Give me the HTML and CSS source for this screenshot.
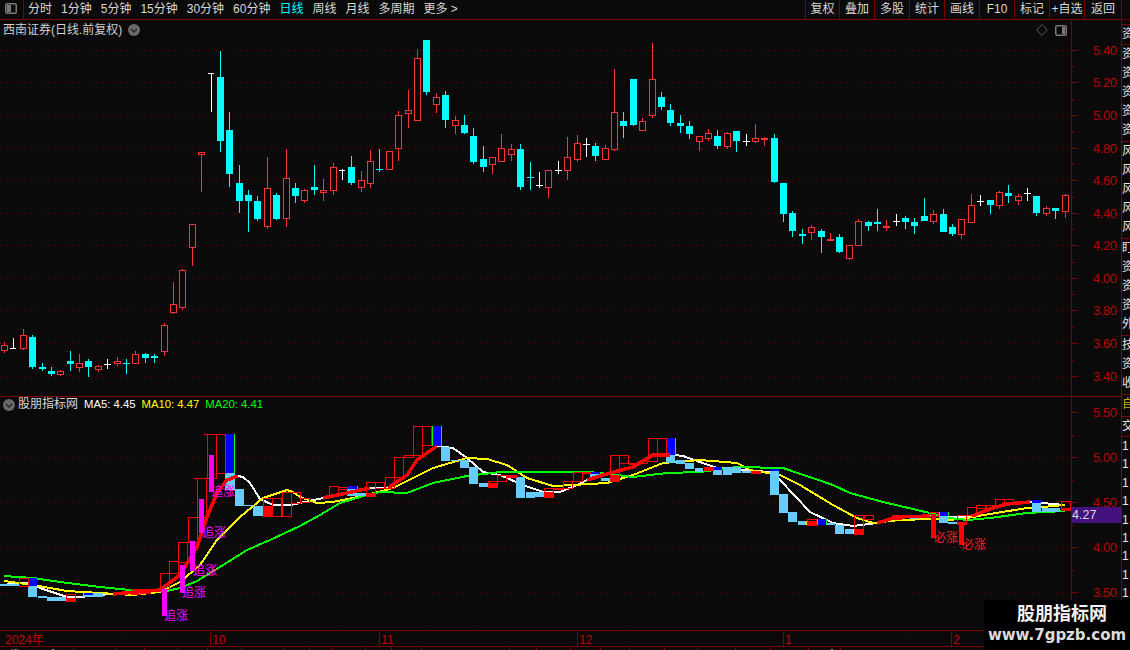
FILE: index.html
```html
<!DOCTYPE html>
<html lang="zh-CN">
<head>
<meta charset="utf-8">
<title>西南证券 日线</title>
<link rel="stylesheet" href="styles.css">
</head>
<body>
<div class="app">
  <header class="toolbar">
    <div class="layout-btn">
      <svg class="panel-icon" viewBox="0 0 12 11"><rect x="0.75" y="0.75" width="10.5" height="9.5" rx="1.5" class="pi-frame"/><rect x="2" y="2" width="4" height="7" class="pi-fill"/></svg>
    </div>
    <nav class="periods">
      <span>分时</span><span>1分钟</span><span>5分钟</span><span>15分钟</span><span>30分钟</span><span>60分钟</span><span class="active">日线</span><span>周线</span><span>月线</span><span>多周期</span><span>更多 &gt;</span>
    </nav>
    <nav class="tools">
      <span>复权</span><span>叠加</span><span>多股</span><span>统计</span><span>画线</span><span>F10</span><span>标记</span><span>+自选</span><span>返回</span>
    </nav>
    <div class="corner"></div>
  </header>

  <div class="workspace">
    <div class="charts">
      <section class="panel panel-main">
        <div class="chart-title">西南证券(日线.前复权)
          <svg class="chev" viewBox="0 0 12 12"><circle cx="6" cy="6" r="6" class="chev-bg"/><path d="M3 5l3 3 3-3" class="chev-mark"/></svg>
        </div>
        <div class="chart-tools">
          <svg class="diamond" viewBox="0 0 12 12"><path d="M6 .7L11.3 6 6 11.300 .7 6z" class="dia"/></svg>
          <svg class="panel-icon" viewBox="0 0 12 11"><rect x="0.75" y="0.75" width="10.5" height="9.5" rx="1.500" class="pi-frame"/><rect x="7" y="2" width="3" height="7" class="pi-fill"/></svg>
        </div>
        <svg class="plot" width="1121" height="376" viewBox="0 20 1121 376">
          <path class="grid" d="M0 50.500H1071M0 82.500H1071M0 115.500H1071M0 148.500H1071M0 180.500H1071M0 213.500H1071M0 245.500H1071M0 278.500H1071M0 310.500H1071M0 343.500H1071M0 376.500H1071"/>
          <path class="axis" d="M1071.500 20V396M1071 50.500h7M1071 82.500h7M1071 115.500h7M1071 148.500h7M1071 180.500h7M1071 213.500h7M1071 245.500h7M1071 278.500h7M1071 310.500h7M1071 343.500h7M1071 376.500h7M1071 66.500h3M1071 99.500h3M1071 132.500h3M1071 164.500h3M1071 197.500h3M1071 229.500h3M1071 262.500h3M1071 294.500h3M1071 327.500h3M1071 360.500h3"/>
          <g class="ticklabels">
            <text x="1093" y="55">5.40</text><text x="1093" y="87">5.20</text><text x="1093" y="120">5.00</text><text x="1093" y="153">4.80</text><text x="1093" y="185">4.60</text><text x="1093" y="218">4.40</text><text x="1093" y="250">4.20</text><text x="1093" y="283">4.00</text><text x="1093" y="315">3.80</text><text x="1093" y="348">3.60</text><text x="1093" y="381">3.40</text>
          </g>
          <path class="wick-red" d="M4.500 342V353M23.500 329V350M60.500 370V376M79.500 354V372M98.500 365V372M117.500 357V366M135.500 351V364M164.500 323V356M173.500 282V314M182.500 269V310M192.500 224V266M201.500 153V192M267.500 157V229M286.500 149V227M304.500 189V203M323.500 179V201M333.500 163V195M361.500 171V192M370.500 150V188M398.500 111V161M408.500 90V128M417.500 49V121M436.500 93V113M455.500 116V134M492.500 157V174M501.500 134V162M511.500 144V161M548.500 170V198M567.500 137V180M577.500 135V162M605.500 145V160M614.500 69V151M642.500 118V131M652.500 43V118M699.500 136V151M708.500 129V141M727.500 132V149M755.500 124V143M764.500 137V146M811.500 225V240M830.500 233V241M849.500 245V260M858.500 219V246M886.500 220V231M933.500 210V224M961.500 219V239M971.500 194V223M999.500 191V209M1018.500 194V205M1046.500 206V216M1065.500 194V218"/>
          <path class="body-red" d="M1.500 345.500h6v5h-6zM20.500 335.500h6v13h-6zM57.500 371.500h6v3h-6zM76.500 363.500h6v4h-6zM95.500 366.500h6v3h-6zM114.500 361.500h6v2h-6zM132.500 354.500h6v9h-6zM161.500 325.500h6v26h-6zM170.500 304.500h6v8h-6zM179.500 270.500h6v37h-6zM189.500 224.500h6v23h-6zM198.500 152.500h6v2h-6zM264.500 188.500h6v38h-6zM283.500 178.500h6v40h-6zM301.500 190.500h6v10h-6zM320.500 190.500h6v2h-6zM330.500 167.500h6v23h-6zM358.500 180.500h6v7h-6zM367.500 161.500h6v22h-6zM386.500 151.500h6v18h-6zM395.500 115.500h6v33h-6zM405.500 110.500h6v3h-6zM414.500 58.500h6v62h-6zM433.500 97.500h6v7h-6zM452.500 120.500h6v5h-6zM489.500 157.500h6v7h-6zM498.500 148.500h6v13h-6zM508.500 149.500h6v5h-6zM545.500 170.500h6v17h-6zM564.500 157.500h6v13h-6zM574.500 143.500h6v16h-6zM602.500 148.500h6v11h-6zM611.500 112.500h6v37h-6zM639.500 121.500h6v9h-6zM649.500 79.500h6v36h-6zM696.500 136.500h6v5h-6zM705.500 133.500h6v5h-6zM724.500 133.500h6v13h-6zM752.500 138.500h6v3h-6zM761.500 138.500h6v1h-6zM808.500 227.500h6v5h-6zM827.500 239.500h6v1h-6zM846.500 245.500h6v13h-6zM855.500 221.500h6v24h-6zM883.500 226.500h6v1h-6zM930.500 214.500h6v7h-6zM958.500 219.500h6v15h-6zM968.500 205.500h6v17h-6zM996.500 192.500h6v13h-6zM1015.500 196.500h6v4h-6zM1043.500 208.500h6v5h-6zM1062.500 195.500h6v16h-6z"/>
          <path class="wick-cyan" d="M32.500 335V369M42.500 363V371M51.500 367V376M70.500 351V371M88.500 359V377M126.500 359V374M123 363.500h7M145.500 353V363M154.500 354V363M220.500 51V152M229.500 112V187M239.500 165V213M248.500 190V232M257.500 196V221M276.500 193V220M295.500 183V203M314.500 165V195M351.500 156V185M379.500 149V172M376 169.500h7M426.500 40V95M445.500 91V128M464.500 115V134M473.500 128V164M483.500 146V172M520.500 144V190M530.500 162V190M527 177.500h7M595.500 143V161M623.500 112V138M633.500 79V126M661.500 92V110M670.500 104V126M680.500 115V133M689.500 121V139M717.500 130V149M736.500 131V152M774.500 134V183M783.500 183V222M792.500 211V237M802.500 229V244M821.500 229V253M839.500 234V253M868.500 221V231M877.500 209V231M905.500 216V229M914.500 218V234M924.500 198V221M943.500 209V232M952.500 224V236M990.500 200V214M1008.500 185V203M1036.500 196V216M1055.500 208V219"/>
          <path class="body-cyan" d="M29 337h7v30h-7zM39 367h7v2h-7zM48 371h7v3h-7zM67 361h7v3h-7zM85 361h7v6h-7zM142 354h7v4h-7zM151 356h7v2h-7zM217 77h7v64h-7zM226 130h7v44h-7zM236 183h7v18h-7zM245 195h7v6h-7zM254 201h7v18h-7zM273 195h7v24h-7zM292 188h7v8h-7zM311 187h7v3h-7zM348 167h7v16h-7zM423 40h7v52h-7zM442 95h7v25h-7zM461 125h7v8h-7zM470 136h7v26h-7zM480 159h7v8h-7zM517 149h7v38h-7zM592 146h7v10h-7zM620 121h7v5h-7zM630 79h7v46h-7zM658 97h7v10h-7zM667 110h7v13h-7zM677 123h7v3h-7zM686 126h7v8h-7zM714 136h7v10h-7zM733 131h7v10h-7zM771 138h7v44h-7zM780 183h7v31h-7zM789 213h7v18h-7zM799 234h7v2h-7zM818 231h7v6h-7zM836 237h7v15h-7zM865 222h7v4h-7zM874 222h7v2h-7zM902 218h7v4h-7zM911 222h7v4h-7zM921 216h7v5h-7zM940 214h7v18h-7zM949 227h7v7h-7zM987 200h7v5h-7zM1005 193h7v3h-7zM1033 196h7v17h-7zM1052 208h7v3h-7z"/>
          <path class="wick-white" d="M13.500 338V349M10 348.500h6M107.500 359V369M104 364.500h7M211.500 73V112M208 73.500h6M342.500 169V180M339 170.500h6M539.500 172V188M536 185.500h7M558.500 161V174M555 170.500h7M586.500 138V157M583 144.500h7M746.500 134V146M743 141.500h7M896.500 214V226M893 221.500h7M980.500 195V206M977 201.500h7M1027.500 188V201M1024 193.500h7"/>
        </svg>
      </section>

      <section class="panel panel-sub">
        <div class="legend">
          <svg class="chev" viewBox="0 0 12 12"><circle cx="6" cy="6" r="6" class="chev-bg"/><path d="M3 5l3 3 3-3" class="chev-mark"/></svg>
          <span class="legend-name">股朋指标网</span><span class="ma5">MA5: 4.45</span><span class="ma10">MA10: 4.47</span><span class="ma20">MA20: 4.41</span>
        </div>
        <svg class="plot" width="1121" height="233" viewBox="0 397 1121 233">
          <path class="grid" d="M0 457.500H1071M0 502.500H1071M0 547.500H1071M0 592.500H1071"/>
          <path class="axis" d="M1071.500 397V630M1071 412.500h7M1071 457.500h7M1071 502.500h7M1071 547.500h7M1071 592.500h7M1071 435.500h3M1071 480.500h3M1071 525.500h3M1071 570.500h3M1071 615.500h3"/>
          <g class="ticklabels">
            <text x="1093" y="417">5.50</text><text x="1093" y="462">5.00</text><text x="1093" y="507">4.50</text><text x="1093" y="552">4.00</text><text x="1093" y="597">3.50</text>
          </g>
          <polyline class="ma-white" points="0,585 27,583 40,588 67,597 80,597 110,594 133,594 160,590 180,575 197,547 207,517 217,493 227,480 238,476 243,477 250,483 260,499 273,505 290,505 300,503 323,498 347,493 370,488 388,488 407,475 417,460 437,446 453,448 467,458 483,472 500,475 523,485 543,492 560,492 577,485 587,480 610,473 633,467 653,455 667,454 683,456 700,462 717,468 770,472 780,480 810,512 833,523 853,526 877,523 897,517 930,516 967,517 972,516 993,508 1007,504 1030,502 1065,505"/>
          <polyline class="ma-yellow" points="4,581 33,585 67,591 100,593 133,595 160,592 180,582 200,565 217,540 240,517 263,498 287,490 293,492 300,497 317,503 333,502 367,495 393,488 413,478 433,468 467,458 487,459 507,465 527,478 553,486 573,485 607,483 633,475 663,463 700,460 737,463 750,470 780,475 800,485 833,505 857,518 873,523 900,520 930,519 950,520 967,518 990,514 1027,508 1043,507 1065,505"/>
          <polyline class="ma-green" points="4,576 33,578 60,582 100,587 130,590 167,591 180,588 197,581 220,567 247,550 270,540 300,526 320,515 340,503 367,495 380,492 407,493 433,483 467,476 500,472 587,472 600,473 633,477 667,473 700,472 737,467 783,468 833,485 850,493 883,502 930,513 950,518 967,520 990,518 1027,513 1065,511"/>
          <path class="bar-lightblue" d="M0 584h19v2h-19zM28 586h9v11h-9zM38 596h9v2h-9zM47 597h19v4h-19zM83 593h20v4h-20zM225 473h10v17h-10zM235 489h9v17h-9zM244 505h9v1h-9zM253 506h10v10h-10zM347 489h10v7h-10zM357 493h9v3h-9zM441 447h9v14h-9zM451 460h9v1h-9zM460 460h9v8h-9zM469 467h9v17h-9zM479 483h9v4h-9zM516 477h9v21h-9zM526 492h9v6h-9zM535 492h9v5h-9zM590 474h10v4h-10zM601 478h9v3h-9zM666 455h9v8h-9zM676 460h9v4h-9zM685 463h9v6h-9zM695 468h8v4h-8zM713 470h9v5h-9zM723 467h9v8h-9zM732 467h9v6h-9zM742 471h9v2h-9zM770 471h9v24h-9zM779 494h9v19h-9zM788 512h9v10h-9zM798 521h8v4h-8zM826 523h9v2h-9zM835 525h9v9h-9zM845 529h8v5h-8zM910 516h9v3h-9zM939 515h9v8h-9zM948 522h9v2h-9zM1032 502h9v10h-9zM1042 508h18v4h-18z"/>
          <path class="bar-blue" d="M28 578h9v8h-9zM84 593h9v2h-9zM225 434h9v39h-9zM347 486h10v3h-10zM432 426h9v20h-9zM591 472h9v2h-9zM666 438h9v17h-9zM713 467h9v3h-9zM770 469h9v2h-9zM817 519h9v6h-9zM910 515h9v2h-9zM939 512h9v4h-9zM1032 500h9v3h-9z"/>
          <path class="side-green" d="M225.500 434V473M234.500 434V473M357.500 486V489M432.500 426V446M441.500 426V446M600.500 472V474M666.500 438V455M675.500 438V455M817.500 519V525M826.500 519V525M939.500 512V516M948.500 512V516"/>
          <path class="bar-red" d="M66 598h9v3h-9zM263 506h9v10h-9zM366 493h9v3h-9zM488 483h9v4h-9zM507 475h9v2h-9zM544 492h9v5h-9zM610 475h9v6h-9zM704 467h9v3h-9zM751 471h9v2h-9zM807 521h9v4h-9zM854 529h9v5h-9zM957 522h9v2h-9zM1061 508h9v3h-9z"/>
          <path class="side-yellow" d="M263.500 506V516M272.500 506V516M375.500 493V496M497.500 483V487M553.500 492V497M619.500 475V481M806.500 521V525M853.500 529V534M863.500 529V534"/>
          <path class="box-red" d="M19.500 578.500h9v8h-9zM66.500 594.500h9v7h-9zM131.500 589.500h9v5h-9zM141.500 589.500h9v4h-9zM160.500 573.500h9v16h-9zM169.500 561.500h9v12h-9zM178.500 542.500h9v20h-9zM188.500 517.500h9v25h-9zM197.500 478.500h9v39h-9zM194 478.500h3M207.500 434.500h9v44h-9zM204 434.500h3M216.500 434.500h9v39h-9zM263.500 498.500h9v18h-9zM272.500 498.500h9v18h-9zM282.500 492.500h9v24h-9zM291.500 492.500h9v11h-9zM300.500 498.500h9v4h-9zM329.500 486.500h9v10h-9zM338.500 487.500h9v2h-9zM366.500 482.500h9v14h-9zM375.500 482.500h9v6h-9zM385.500 477.500h9v11h-9zM394.500 457.500h9v20h-9zM404.500 455.500h9v2h-9zM413.500 426.500h9v29h-9zM422.500 426.500h9v19h-9zM488.500 481.500h9v6h-9zM497.500 475.500h9v6h-9zM507.500 475.500h9v2h-9zM544.500 488.500h9v9h-9zM554.500 488.500h9v1h-9zM563.500 481.500h9v7h-9zM573.500 472.500h9v9h-9zM582.500 472.500h8v1h-8zM610.500 455.500h9v26h-9zM619.500 455.500h9v8h-9zM629.500 463.500h9v1h-9zM638.500 461.500h9v2h-9zM648.500 438.500h9v23h-9zM657.500 438.500h9v16h-9zM704.500 467.500h9v3h-9zM751.500 471.500h9v2h-9zM807.500 519.500h9v6h-9zM854.500 515.500h9v19h-9zM864.500 515.500h9v4h-9zM892.500 515.500h9v4h-9zM929.500 512.500h9v4h-9zM957.500 515.500h9v9h-9zM967.500 507.500h9v8h-9zM976.500 505.500h9v3h-9zM986.500 505.500h9v3h-9zM995.500 499.500h9v7h-9zM1004.500 499.500h9v4h-9zM1061.500 501.500h9v9h-9z"/>
          <polyline class="ma-red" points="113,594 160,590 180,575 197,547 207,517 217,493 227,480 238,476"/>
          <polyline class="ma-red" points="323,498 347,493 370,488"/>
          <polyline class="ma-red" points="388,488 407,475 417,460 437,446"/>
          <polyline class="ma-red" points="587,480 610,473 633,467 653,455 670,455"/>
          <polyline class="ma-red" points="877,523 897,517 930,516"/>
          <polyline class="ma-red" points="972,516 993,508 1007,504 1030,502"/>
          <path class="signal-magenta" d="M162 589h5v27h-5zM180 565h5v28h-5zM190 541h5v30h-5zM199 499h5v34h-5zM209 455h5v37h-5z"/>
          <path class="signal-red" d="M931 514h5v24h-5zM959 525h5v20h-5z"/>
          <g class="signal-text-magenta">
            <text x="164" y="620">追涨</text><text x="182" y="597">追涨</text><text x="193" y="575">追涨</text><text x="202" y="537">追涨</text><text x="211" y="496">追涨</text>
          </g>
          <g class="signal-text-red">
            <text x="934" y="542">必涨</text><text x="962" y="549">必涨</text>
          </g>
        </svg>
        <div class="price-tag">4.27</div>
      </section>

      <svg class="timeline" width="1121" height="15" viewBox="0 631 1121 15">
        <path class="axis" d="M210.500 631V646M379.500 631V646M577.500 631V646M783.500 631V646M951.500 631V646M76.500 631v2M121.500 631v2M166.500 631v2M295.500 631v2M338.500 631v2M429.500 631v2M477.500 631v2M527.500 631v2M629.500 631v2M680.500 631v2M732.500 631v2M824.500 631v2M868.500 631v2M910.500 631v2M1071.500 631V646"/>
        <g class="timelabels">
          <text x="5" y="644">2024年</text><text x="212" y="644">10</text><text x="381" y="644">11</text><text x="579" y="644">12</text><text x="785" y="644">1</text><text x="953" y="644">2</text>
        </g>
      </svg>

      <svg class="footer-strip" width="1121" height="3" viewBox="0 647 1121 3">
        <path class="axis" d="M73.500 647v3M115.500 647v3M144.500 647v3M177.500 647v3M207.500 647v3M241.500 647v3M283.500 647v3M309.500 647v3M332.500 647v3M365.500 647v3M391.500 647v3M421.500 647v3M509.500 647v3M536.500 647v3M570.500 647v3M600.500 647v3M629.500 647v3M664.500 647v3M697.500 647v3M735.500 647v3M770.500 647v3M808.500 647v3M840.500 647v3"/>
        <g class="footer-text"><text x="8" y="660">代码</text><text x="48" y="660">名</text><text x="826" y="660">十</text></g>
        <text class="footer-cyan" x="846" y="660">现价</text>
      </svg>
    </div>

    <aside class="side">
      <div class="side-head"></div>
      <div class="side-group one"><span>资</span></div>
      <div class="side-group five"><span>资</span><span>资</span><span>资</span><span>资</span><span>资</span></div>
      <div class="side-group five"><span>风</span><span>风</span><span>风</span><span>风</span><span>风</span></div>
      <div class="side-group five"><span>盯</span><span>资</span><span>资</span><span>资</span><span>外</span></div>
      <div class="side-group three"><span>技</span><span>资</span><span>收</span></div>
      <div class="side-group yellow"><span>自</span></div>
      <div class="side-group one"><span>交</span></div>
      <div class="side-nums"><span>1</span><span>1</span><span>1</span><span>1</span><span>1</span><span>1</span><span>1</span><span>1</span><span>1</span></div>
    </aside>
  </div>

  <div class="watermark">
    <div class="wm-name">股朋指标网</div>
    <div class="wm-url">www.7gpzb.com</div>
  </div>
</div>
</body>
</html>
```

FILE: styles.css
```css
* { box-sizing: border-box; }
html, body { margin: 0; padding: 0; background: #0a0a0a; }
body { font-family: "Liberation Sans", "Noto Sans CJK SC", sans-serif; font-size: 12px; color: #d8d8d8; }
.app { position: relative; width: 1130px; height: 650px; overflow: hidden; display: flex; flex-direction: column; background: #0a0a0a; }

.toolbar { flex: none; display: flex; height: 20px; border-bottom: 1px solid #7d0000; line-height: 19px; }
.layout-btn { flex: none; width: 24px; display: flex; align-items: center; justify-content: center; border-right: 1px solid #7d0000; padding-bottom: 2px; padding-right: 1px; }
.panel-icon { width: 12px; height: 11px; display: block; }
.pi-frame { fill: none; stroke: #7a7a7a; stroke-width: 1.5; }
.pi-fill { fill: #7a7a7a; }
.periods { flex: 1; display: flex; gap: 9px; padding-left: 4px; white-space: nowrap; }
.periods .active { color: #00ffff; }
.tools { flex: none; display: flex; }
.tools span { width: 35px; text-align: center; border-left: 1px solid #7d0000; white-space: nowrap; }
.tools span:first-child { width: 34px; }
.tools span:last-child { width: 37px; }
.corner { flex: none; width: 9px; border-left: 1px solid #7d0000; }

.workspace { flex: 1; display: flex; min-height: 0; }
.charts { flex: none; width: 1121px; display: flex; flex-direction: column; }
.panel { position: relative; flex: none; border-bottom: 1px solid #7d0000; }
.panel-main { height: 377px; }
.panel-sub { height: 234px; }
.plot { display: block; }

.chart-title { position: absolute; left: 3px; top: 2px; display: flex; align-items: center; gap: 6px; color: #d0d0d0; line-height: 16px; white-space: nowrap; }
.chev { width: 12px; height: 12px; flex: none; display: block; }
.chev-bg { fill: #696969; }
.chev-mark { fill: none; stroke: #222; stroke-width: 1.3; }
.chart-tools { position: absolute; left: 1036px; top: 4px; display: flex; align-items: center; gap: 7px; }
.diamond { width: 12px; height: 12px; display: block; }
.dia { fill: none; stroke: #5c5c5c; stroke-width: 1; }

.legend { position: absolute; left: 3px; top: 0; display: flex; align-items: center; height: 15px; font-size: 11.3px; white-space: nowrap; line-height: 15px; }
.legend-name { font-size: 12px; margin: 0 6px 0 3px; color: #d8d8d8; }
.ma5 { color: #fff; margin-right: 6px; }
.ma10 { color: #ffff00; margin-right: 6px; }
.ma20 { color: #00ff00; }

.price-tag { position: absolute; left: 1072px; top: 110px; width: 49px; height: 16px; background: #43127e; color: #d8d8d8; font-size: 12.5px; line-height: 16px; }

.grid { fill: none; stroke: #7a0000; stroke-width: 1; stroke-dasharray: 1 5; shape-rendering: crispEdges; }
.axis { fill: none; stroke: #7d0000; stroke-width: 1; shape-rendering: crispEdges; }
.ticklabels text { fill: #b80000; font-size: 13px; font-family: "Liberation Sans", sans-serif; letter-spacing: -0.45px; }

.wick-red { fill: none; stroke: #ff3333; stroke-width: 1; shape-rendering: crispEdges; }
.body-red { fill: #0a0a0a; stroke: #ff3333; stroke-width: 1; shape-rendering: crispEdges; }
.wick-cyan { fill: none; stroke: #00ffff; stroke-width: 1; shape-rendering: crispEdges; }
.body-cyan { fill: #00ffff; shape-rendering: crispEdges; }
.wick-white { fill: none; stroke: #ffffff; stroke-width: 1; shape-rendering: crispEdges; }

.ma-white, .ma-yellow, .ma-green, .ma-red { fill: none; shape-rendering: crispEdges; stroke-linejoin: round; }
.ma-white { stroke: #ffffff; stroke-width: 2; }
.ma-yellow { stroke: #ffff00; stroke-width: 2; }
.ma-green { stroke: #00ff00; stroke-width: 2; }
.ma-red { stroke: #ff0000; stroke-width: 3.5; }
.bar-lightblue { fill: #66ccff; shape-rendering: crispEdges; }
.bar-blue { fill: #0000ff; shape-rendering: crispEdges; }
.bar-red { fill: #ff0000; shape-rendering: crispEdges; }
.side-green { fill: none; stroke: #00ff00; shape-rendering: crispEdges; }
.side-yellow { fill: none; stroke: #ffff00; shape-rendering: crispEdges; }
.box-red { fill: none; stroke: #ff0000; stroke-width: 1; shape-rendering: crispEdges; }
.signal-magenta { fill: #ff00ff; shape-rendering: crispEdges; }
.signal-red { fill: #ff0000; shape-rendering: crispEdges; }
.signal-text-magenta text, .signal-text-red text { font-size: 12px; font-family: "Noto Sans CJK SC", sans-serif; }
.signal-text-magenta text { fill: #ff00ff; }
.signal-text-red text { fill: #ff2020; }

.timeline { display: block; flex: none; }
.timelabels text { fill: #c00000; font-size: 12.5px; font-family: "Liberation Sans", "Noto Sans CJK SC", sans-serif; letter-spacing: -0.3px; }
.footer-strip { display: block; flex: none; border-top: 1px solid #7d0000; height: 4px; }
.footer-text text { fill: #e8e8e8; font-size: 12px; }
.footer-cyan { fill: #00ffff; font-size: 12px; }

.side { flex: none; width: 9px; border-left: 1px solid #7d0000; overflow: hidden; display: flex; flex-direction: column; color: #e4e4e4; }
.side-head { flex: none; height: 5px; border-bottom: 1px solid #7d0000; }
.side-group { flex: none; display: flex; flex-direction: column; border-bottom: 1px solid #7d0000; overflow: hidden; }
.side-group span, .side-nums span { display: block; width: 20px; line-height: 19px; height: 19px; white-space: nowrap; }
.side-group.one { height: 20px; }
.side-group.five { height: 97px; }
.side-group.three { height: 59px; }
.side-group.yellow { height: 22px; color: #c8b400; }
.side-nums { display: flex; flex-direction: column; flex: none; }
.side-nums span { height: 18.4px; line-height: 18.4px; }

.watermark { position: absolute; right: 0; bottom: 0; width: 146px; height: 50px; background: #000; display: flex; flex-direction: column; align-items: center; color: #f2f2f2; }
.wm-name { font-size: 18px; font-weight: 700; line-height: 24px; margin-left: 10px; font-family: "Noto Sans CJK SC", sans-serif; }
.wm-url { font-size: 15px; font-weight: 700; line-height: 18px; margin-top: 2px; font-family: "DejaVu Sans", sans-serif; color: #dcdcdc; white-space: nowrap; }
```
